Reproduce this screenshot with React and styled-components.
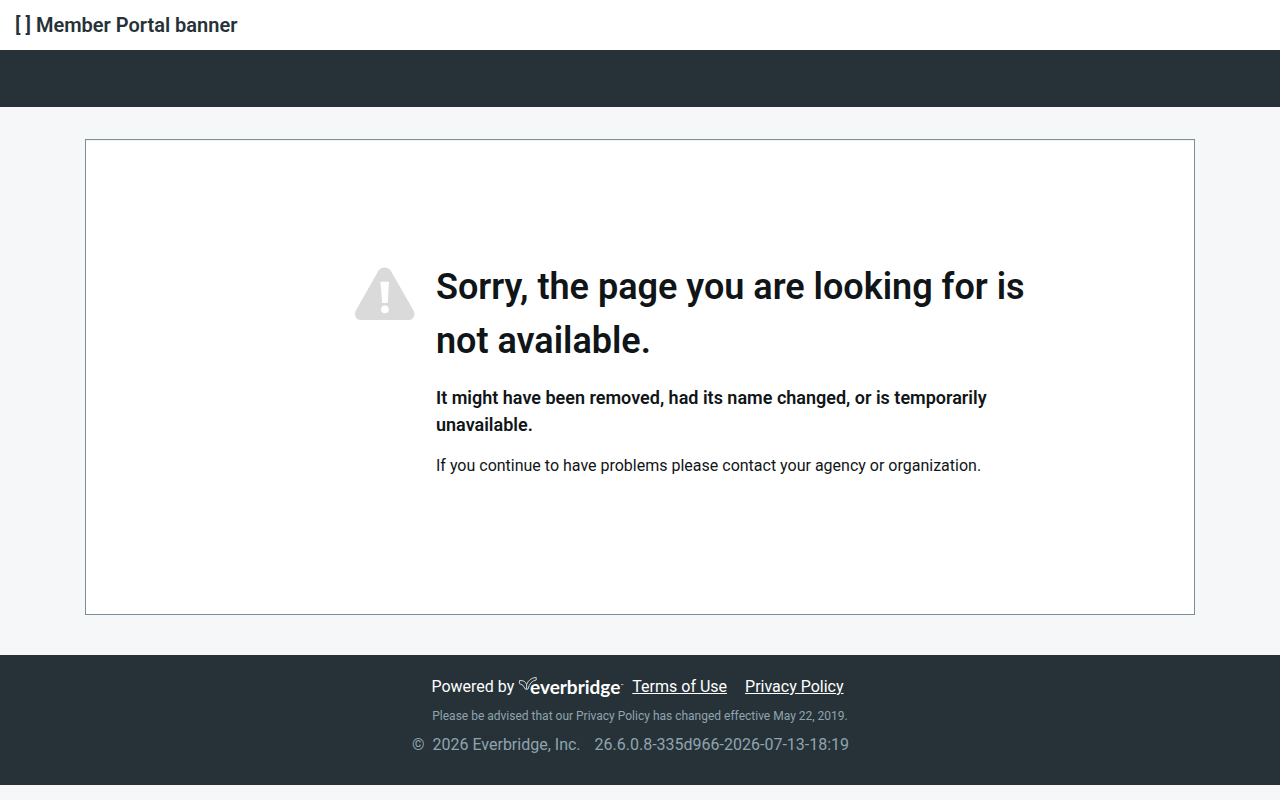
import React from 'react';
import styled, { createGlobalStyle } from 'styled-components';

function WarningIcon() {
  return (
    <WarningSvg viewBox="0 0 62 54" aria-hidden="true">
      <path
        d="M24.6 3.6Q27 .4 30.6 .4T36.6 3.6L59.4 43.2Q61.2 46.6 59.8 49.8T54.6 53H6.8Q3 53 1.6 49.8T2 43.2Z"
        fill="#dadada"
      />
      <path d="M26.4 14.8H35L33.6 36H28.2Z" fill="#fff" />
      <circle cx="30.9" cy="42.3" r="3.9" fill="#fff" />
    </WarningSvg>
  );
}

function EverbridgeLogo() {
  return (
    <LogoSvg viewBox="0 0 106 24" role="img" aria-label="everbridge">
      <g fill="none" stroke="#dfe4e6" strokeWidth="0.9" strokeLinejoin="round">
        <path d="M1.4 5.6Q7.2 5 8.6 9.6Q11 3 18.2 2.4V5Q12 6 10 14Q8.6 14.8 7.2 14Q5.8 9.4 1.4 8.6Z" />
        <path d="M8.6 9.6V14" />
      </g>
      <LogoText x="12" y="19">everbridge</LogoText>
      <path d="M103 9.6H105.4" stroke="#cfd6d9" strokeWidth="0.8" />
    </LogoSvg>
  );
}

function App() {
  return (
    <>
      <GlobalStyle />
      <Banner>[ ] Member Portal banner</Banner>
      <NavBar />
      <Main>
        <ErrorPanel>
          <WarningIcon />
          <ErrorContent>
            <ErrorTitle>Sorry, the page you are looking for is not available.</ErrorTitle>
            <ErrorReason>
              It might have been removed, had its name changed, or is temporarily unavailable.
            </ErrorReason>
            <ErrorHelp>
              If you continue to have problems please contact your agency or organization.
            </ErrorHelp>
          </ErrorContent>
        </ErrorPanel>
      </Main>
      <Footer>
        <PoweredRow>
          <span>Powered by</span>
          <EverbridgeLogo />
          <FooterLinks>
            <FooterLink href="#terms">Terms of Use</FooterLink>
            <FooterLink href="#privacy">Privacy Policy</FooterLink>
          </FooterLinks>
        </PoweredRow>
        <PolicyNotice>
          Please be advised that our Privacy Policy has changed effective May 22, 2019.
        </PolicyNotice>
        <Copyright>
          <span>©</span>
          <CompanyName>2026 Everbridge, Inc.</CompanyName>
          <span>26.6.0.8-335d966-2026-07-13-18:19</span>
        </Copyright>
      </Footer>
    </>
  );
}

const GlobalStyle = createGlobalStyle`
  * {
    box-sizing: border-box;
  }

  body {
    margin: 0;
    background-color: #f5f7f9;
    color: #101518;
    font-family: Roboto, 'Liberation Sans', sans-serif;
    font-size: 16px;
    line-height: 24px;
  }
`;

const Banner = styled.header`
  padding: 10px 15px;
  background-color: #fff;
  color: #263238;
  font-size: 20px;
  font-weight: 600;
  line-height: 30px;
`;

const NavBar = styled.nav`
  height: 57px;
  background-color: #263238;
`;

const Main = styled.main`
  max-width: 1140px;
  margin: 0 auto;
  padding: 32px 15px 40px;
`;

const ErrorPanel = styled.section`
  display: flex;
  align-items: flex-start;
  gap: 20px;
  padding: 120px 120px 120px 268px;
  border: 1px solid #78909c;
  background-color: #fff;
  box-shadow: inset 0 1px 1px rgba(0, 0, 0, 0.05);

  @media (max-width: 991px) {
    padding: 60px 30px;
  }
`;

const WarningSvg = styled.svg`
  flex: none;
  width: 62px;
  height: 54px;
  margin-top: 7px;
`;

const ErrorContent = styled.div`
  flex: 1;
`;

const ErrorTitle = styled.h1`
  margin: 0 0 16px;
  font-size: 36px;
  font-weight: 600;
  line-height: 54px;
`;

const ErrorReason = styled.h2`
  margin: 0 0 16px;
  font-size: 18px;
  font-weight: 600;
  line-height: 27px;
`;

const ErrorHelp = styled.p`
  margin: 0 0 16px;
`;

const Footer = styled.footer`
  display: flex;
  flex-direction: column;
  align-items: center;
  gap: 8px;
  padding: 20px 15px 28px;
  background-color: #263238;
  color: #90a4ae;
`;

const PoweredRow = styled.div`
  display: flex;
  flex-wrap: wrap;
  gap: 4px;
  padding-right: 5px;
  color: #fff;
`;

const LogoSvg = styled.svg`
  width: 106px;
  height: 24px;
`;

const LogoText = styled.text`
  fill: #fff;
  font-family: Lato, sans-serif;
  font-size: 19px;
  font-weight: 700;
`;

const FooterLinks = styled.div`
  display: flex;
  gap: 18px;
  margin-left: 4px;
`;

const FooterLink = styled.a`
  color: #fff;
  text-decoration: underline;
`;

const PolicyNotice = styled.p`
  margin: 0;
  font-size: 12px;
  line-height: 18px;
`;

const Copyright = styled.div`
  display: flex;
  flex-wrap: wrap;
  gap: 8px;
  padding-right: 19px;
`;

const CompanyName = styled.span`
  margin-right: 6px;
`;

export default App;
